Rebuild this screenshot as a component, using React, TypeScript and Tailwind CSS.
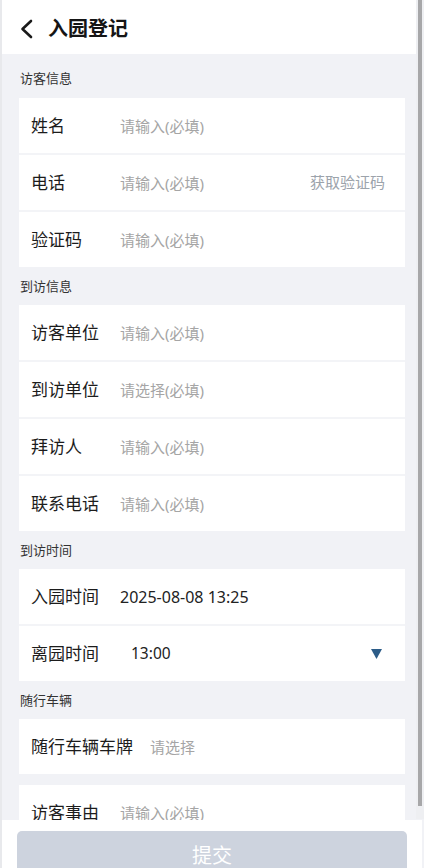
import React from "react";

type Row = { label: string; value?: string; placeholder?: string; right?: React.ReactNode; valueClass?: string };

function FormRow({ label, value, placeholder, right, valueClass }: Row) {
  return (
    <div className="flex h-[55px] items-center pl-3 pr-5 bg-white">
      <div className="min-w-[72px] mr-[17px] text-[17px] leading-[22px] text-[#1c1c1c]">{label}</div>
      <div className="flex-1 min-w-0">
        {value ? (
          <span className={valueClass ?? "text-[16px] text-[#222]"}>{value}</span>
        ) : (
          <span className="text-[15px] text-[#a5a5a5]">{placeholder}</span>
        )}
      </div>
      {right}
    </div>
  );
}

function Card({ children }: { children: React.ReactNode }) {
  return <div className="mx-[19px] flex flex-col gap-[2px] bg-[#f3f4f7]">{children}</div>;
}

function SectionLabel({ text, first }: { text: string; first?: boolean }) {
  return (
    <div
      className={
        first
          ? "h-[44px] pt-[16px] pl-[20px] text-[13px] leading-[17px] text-[#333]"
          : "h-[38px] pt-[11px] pl-[20px] text-[13px] leading-[17px] text-[#333]"
      }
    >
      {text}
    </div>
  );
}

export default function App() {
  return (
    <div className="relative w-[424px] h-[868px] overflow-hidden bg-[#f1f2f6] font-['Noto_Sans','Noto_Sans_CJK_SC',sans-serif]">
      {/* header */}
      <div className="flex h-[54px] items-center bg-white pl-[19px] pt-[4px]">
        <svg width="14" height="20" viewBox="0 0 14 20" fill="none">
          <path d="M12 2 L3.5 10 L12 18" stroke="#1a1a1a" strokeWidth="2.6" strokeLinecap="round" strokeLinejoin="round" />
        </svg>
        <div className="ml-[15px] text-[20px] font-bold leading-[26px] text-[#151515]">入园登记</div>
      </div>

      <SectionLabel text="访客信息" first />
      <Card>
        <FormRow label="姓名" placeholder="请输入(必填)" />
        <FormRow
          label="电话"
          placeholder="请输入(必填)"
          right={<span className="text-[15px] text-[#9ca3ab]">获取验证码</span>}
        />
        <FormRow label="验证码" placeholder="请输入(必填)" />
      </Card>

      <SectionLabel text="到访信息" />
      <Card>
        <FormRow label="访客单位" placeholder="请输入(必填)" />
        <FormRow label="到访单位" placeholder="请选择(必填)" />
        <FormRow label="拜访人" placeholder="请输入(必填)" />
        <FormRow label="联系电话" placeholder="请输入(必填)" />
      </Card>

      <SectionLabel text="到访时间" />
      <Card>
        <div className="flex h-[55px] items-center bg-white pl-3 pr-5">
          <div className="min-w-[72px] mr-[17px] text-[17px] leading-[22px] text-[#1c1c1c]">入园时间</div>
          <div className="flex-1 text-[16px] text-[#222]">2025-08-08 13:25</div>
        </div>
        <div className="flex h-[55px] items-center bg-white pl-3 pr-[23px]">
          <div className="min-w-[72px] mr-[17px] text-[17px] leading-[22px] text-[#1c1c1c]">离园时间</div>
          <div className="flex-1 pl-[11px] text-[15.5px] text-[#222]">13:00</div>
          <svg width="11" height="10" viewBox="0 0 11 10">
            <polygon points="0,0 11,0 5.5,10" fill="#2c5c88" />
          </svg>
        </div>
      </Card>

      <SectionLabel text="随行车辆" />
      <Card>
        <FormRow label="随行车辆车牌" placeholder="请选择" />
      </Card>

      <div className="h-[11px]" />
      <Card>
        <FormRow label="访客事由" placeholder="请输入(必填)" />
      </Card>

      {/* left window edge */}
      <div className="absolute left-0 top-0 h-full w-[2px] bg-[#e8e9ec]" />

      {/* scrollbar */}
      <div className="absolute right-0 top-0 h-[819px] w-[8px] bg-[#eeeff2]">
        <div className="ml-[2px] h-[806px] w-[4px] bg-[#a7a7a9]" />
      </div>

      {/* footer */}
      <div className="absolute bottom-0 left-[2px] right-[2px] h-[48px] bg-white px-[15px] pt-[11px]">
        <div className="flex h-[37px] items-start justify-center rounded-t-[5px] bg-[#cdd3de] pt-[14px] text-[20px] leading-[22px] text-white">
          提交
        </div>
      </div>
    </div>
  );
}
